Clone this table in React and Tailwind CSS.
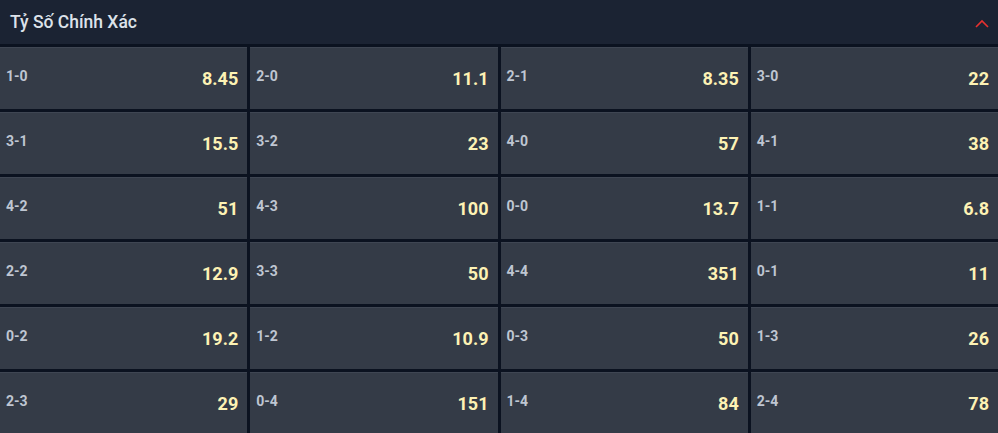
import React from 'react';

const odds = [
  ['1-0', '8.45'], ['2-0', '11.1'], ['2-1', '8.35'], ['3-0', '22'],
  ['3-1', '15.5'], ['3-2', '23'], ['4-0', '57'], ['4-1', '38'],
  ['4-2', '51'], ['4-3', '100'], ['0-0', '13.7'], ['1-1', '6.8'],
  ['2-2', '12.9'], ['3-3', '50'], ['4-4', '351'], ['0-1', '11'],
  ['0-2', '19.2'], ['1-2', '10.9'], ['0-3', '50'], ['1-3', '26'],
  ['2-3', '29'], ['0-4', '151'], ['1-4', '84'], ['2-4', '78'],
];

const App = () => {
  return (
    <div className="w-[998px] h-[433px] overflow-hidden bg-[#0b1220] font-['Roboto',_'Liberation_Sans',_sans-serif]">
      <div className="h-[44px] flex items-center justify-between pl-[10px] pr-[9px] bg-[#1b2333]">
        <span className="text-[17.5px] font-medium text-[#dde2ea]">Tỷ Số Chính Xác</span>
        <svg width="14" height="9" viewBox="0 0 14 9" fill="none" className="mt-[3px]">
          <path d="M1 8 L7 2 L13 8" stroke="#e8312f" strokeWidth="1.6" />
        </svg>
      </div>

      <div className="grid grid-cols-4 gap-[3px] pt-[3px]">
        {odds.map(([score, price]) => (
          <div
            key={score}
            className="h-[62px] flex items-center justify-between pl-[6px] pr-[9px] bg-[#343b47] border-t border-[#3f4653]"
          >
            <span className="text-[14px] font-bold text-[#bfc6d2] -mt-[4px]">{score}</span>
            <span className="text-[18px] font-bold text-[#fdf2b4]">{price}</span>
          </div>
        ))}
      </div>
    </div>
  );
};

export default App;
